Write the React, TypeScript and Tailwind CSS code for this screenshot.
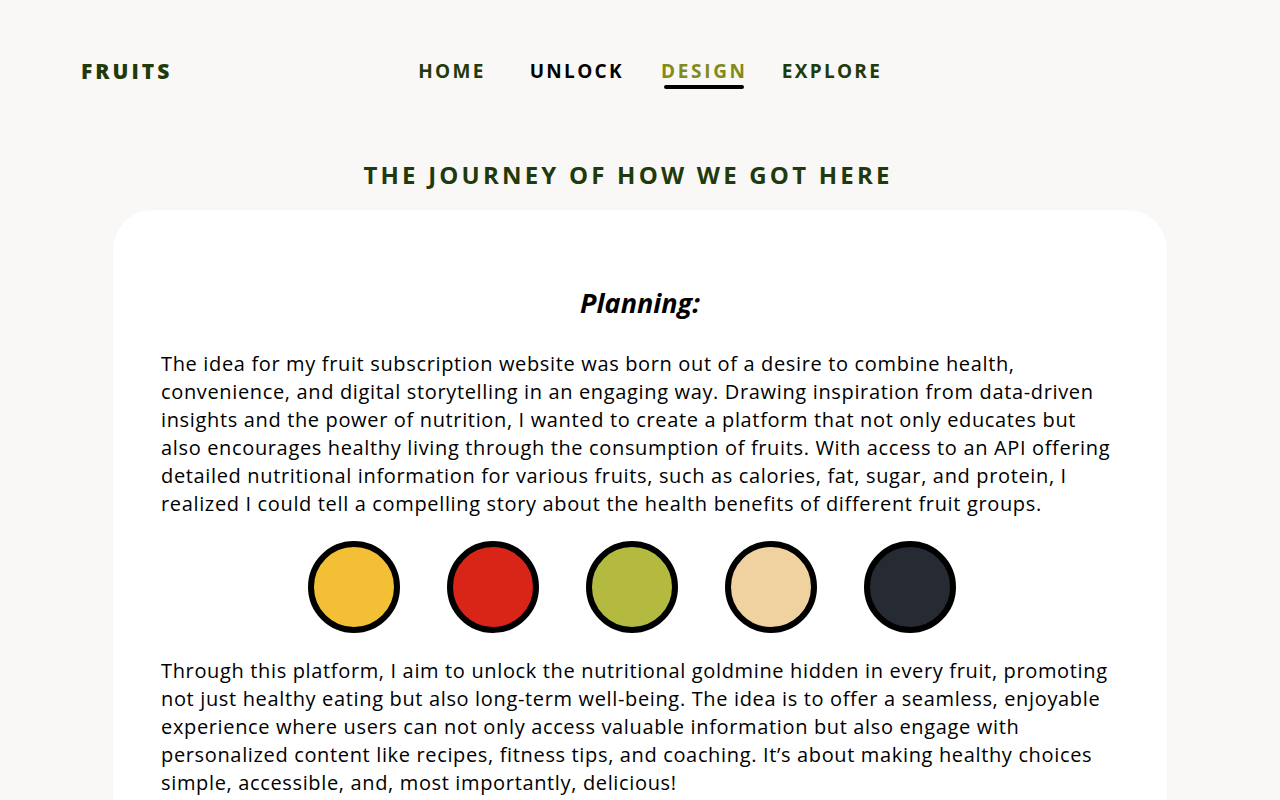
const navItems = [
  { label: "HOME", className: "text-[#1f3a0b]", spacing: "ml-0" },
  { label: "UNLOCK", className: "text-black", spacing: "ml-[44px]" },
  { label: "DESIGN", className: "text-[#838a1c] tracking-[2.7px]", spacing: "ml-[37px]", active: true },
  { label: "EXPLORE", className: "text-[#1f3a0b]", spacing: "ml-[34px]" },
];

const swatches = ["#f2bf35", "#d92418", "#b3ba3f", "#efd2a0", "#262b33"];

export default function App() {
  return (
    <div className="min-h-[800px] bg-[#f9f8f6] font-['Open_Sans',sans-serif] text-black">
      <header className="flex items-start px-[81px] pt-[57px]">
        <div className="text-[21px] font-extrabold leading-[28px] tracking-[3px] text-[#1f3a0b]">
          FRUITS
        </div>
        <nav className="ml-[246px] flex items-start">
          {navItems.map((item) => (
            <div key={item.label} className={`${item.spacing} flex flex-col items-center`}>
              <span className={`text-[19px] font-bold leading-[28px] tracking-[2.3px] ${item.className}`}>
                {item.label}
              </span>
              {item.active && <span className="h-[4px] w-[80px] rounded-full bg-black" />}
            </div>
          ))}
        </nav>
      </header>

      <h1 className="mt-[70px] pr-[24px] text-center text-[24px] font-bold leading-[32px] tracking-[3.2px] text-[#1f3a0b]">
        THE JOURNEY OF HOW WE GOT HERE
      </h1>

      <main className="mx-[113px] mt-[19px] rounded-[40px] bg-white px-[48px] pb-[40px] pt-[73px]">
        <h2 className="text-center text-[27px] font-bold italic leading-[40px]">Planning:</h2>
        <p className="mt-[27px] text-[20px] leading-[28px] tracking-[0.65px]">
          The idea for my fruit subscription website was born out of a desire to combine health,
          convenience, and digital storytelling in an engaging way. Drawing inspiration from
          data-driven insights and the power of nutrition, I wanted to create a platform that not
          only educates but also encourages healthy living through the consumption of fruits. With
          access to an API offering detailed nutritional information for various fruits, such as
          calories, fat, sugar, and protein, I realized I could tell a compelling story about the
          health benefits of different fruit groups.
        </p>

        <div className="mb-[24px] mt-[23px] flex justify-center gap-[47px] pr-[17px]">
          {swatches.map((c) => (
            <div
              key={c}
              className="h-[92px] w-[92px] rounded-full border-[6px] border-black"
              style={{ backgroundColor: c }}
            />
          ))}
        </div>

        <p className="text-[20px] leading-[28px] tracking-[0.65px]">
          Through this platform, I aim to unlock the nutritional goldmine hidden in every fruit,
          promoting not just healthy eating but also long-term well-being. The idea is to offer a
          seamless, enjoyable experience where users can not only access valuable information but
          also engage with personalized content like recipes, fitness tips, and coaching. It’s about
          making healthy choices simple, accessible, and, most importantly, delicious!
        </p>
      </main>
    </div>
  );
}
